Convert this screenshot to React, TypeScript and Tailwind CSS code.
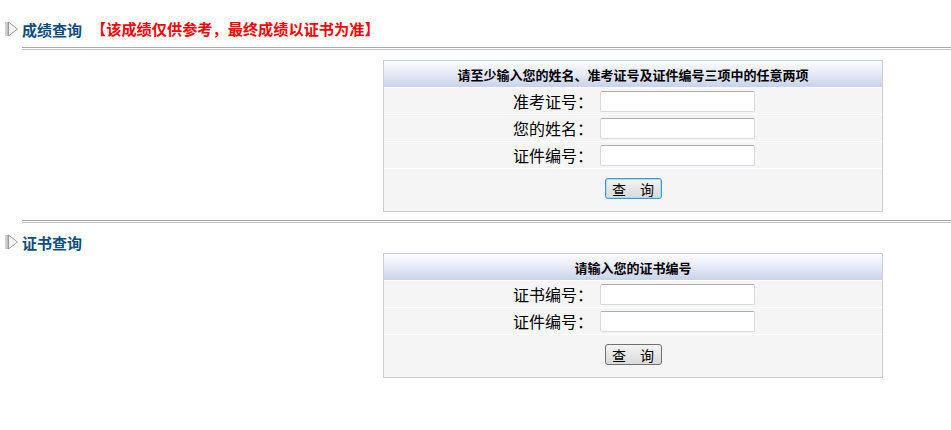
import React from "react";

const FONT = { fontFamily: '"Noto Sans CJK SC", "Liberation Sans", sans-serif' };

function Arrow() {
  return (
    <svg width="14" height="16" viewBox="0 0 14 16" className="shrink-0">
      <rect x="0.5" y="1" width="1" height="14" fill="#a0a0a0" />
      <rect x="2" y="1" width="1" height="14" fill="#bcbcbc" />
      <path d="M3.5 1 L12.5 8 L3.5 15 Z" fill="#f4f4f4" stroke="#9a9a9a" strokeWidth="1" />
    </svg>
  );
}

function Rule() {
  return (
    <div className="ml-[22px] flex flex-col gap-[1px]">
      <div className="h-px bg-[#a8a8a8]" />
      <div className="h-px bg-[#c4c4c4]" />
    </div>
  );
}

function Heading({ title, note }: { title: string; note?: string }) {
  return (
    <div className="flex items-center h-[22px] pl-[5px] gap-[3px]">
      <Arrow />
      <span className="text-[15px] font-bold text-[#0a4d7c] leading-none">{title}</span>
      {note && (
        <span className="ml-[6px] text-[15.2px] font-bold text-[#ff0000] leading-none">{note}</span>
      )}
    </div>
  );
}

function Field({ label }: { label: string }) {
  return (
    <div className="grid grid-cols-[216px_1fr] h-[27px] items-center border-b border-white">
      <span className="text-right pr-[7px] text-[16px] text-black leading-none">{label}</span>
      <input
        type="text"
        className="w-[155px] h-[21px] bg-white border border-[#d6dae0] border-t-[#abadb3] rounded-[2px] outline-none"
      />
    </div>
  );
}

function QueryBox({
  title,
  labels,
  focused,
}: {
  title: string;
  labels: string[];
  focused?: boolean;
}) {
  return (
    <div className="ml-[383px] w-[500px] border border-[#cdcdcd] bg-[#f5f5f5]">
      <div className="h-[27px] flex items-center justify-center bg-gradient-to-b from-[#fbfcfe] via-[#e6eaf6] to-[#c8d2eb] border-b border-white">
        <span className="text-[13px] font-bold text-black leading-none">{title}</span>
      </div>
      {labels.map((l) => (
        <Field key={l} label={l} />
      ))}
      <div className="flex justify-center pt-[9px] pb-[12px]">
        <button
          className={
            focused
              ? "w-[57px] h-[21px] rounded-[3px] border border-[#3d9ad6] bg-gradient-to-b from-[#f4f4f4] to-[#d9d9d9] text-[14px] leading-none text-black shadow-[inset_0_0_0_1px_#a8dcf5]"
              : "w-[57px] h-[21px] rounded-[3px] border border-[#707070] bg-gradient-to-b from-[#f4f4f4] to-[#dadada] text-[14px] leading-none text-black"
          }
        >
          查　询
        </button>
      </div>
    </div>
  );
}

export default function App() {
  return (
    <div className="w-[951px] h-[430px] bg-white overflow-hidden" style={FONT}>
      <div className="pt-[18px]">
        <Heading title="成绩查询" note="【该成绩仅供参考，最终成绩以证书为准】" />
      </div>
      <div className="mt-[7px]">
        <Rule />
      </div>
      <div className="mt-[10px]">
        <QueryBox
          title="请至少输入您的姓名、准考证号及证件编号三项中的任意两项"
          labels={["准考证号：", "您的姓名：", "证件编号："]}
          focused
        />
      </div>
      <div className="mt-[8px]">
        <Rule />
      </div>
      <div className="mt-[8px]">
        <Heading title="证书查询" />
      </div>
      <div>
        <QueryBox title="请输入您的证书编号" labels={["证书编号：", "证件编号："]} />
      </div>
    </div>
  );
}
